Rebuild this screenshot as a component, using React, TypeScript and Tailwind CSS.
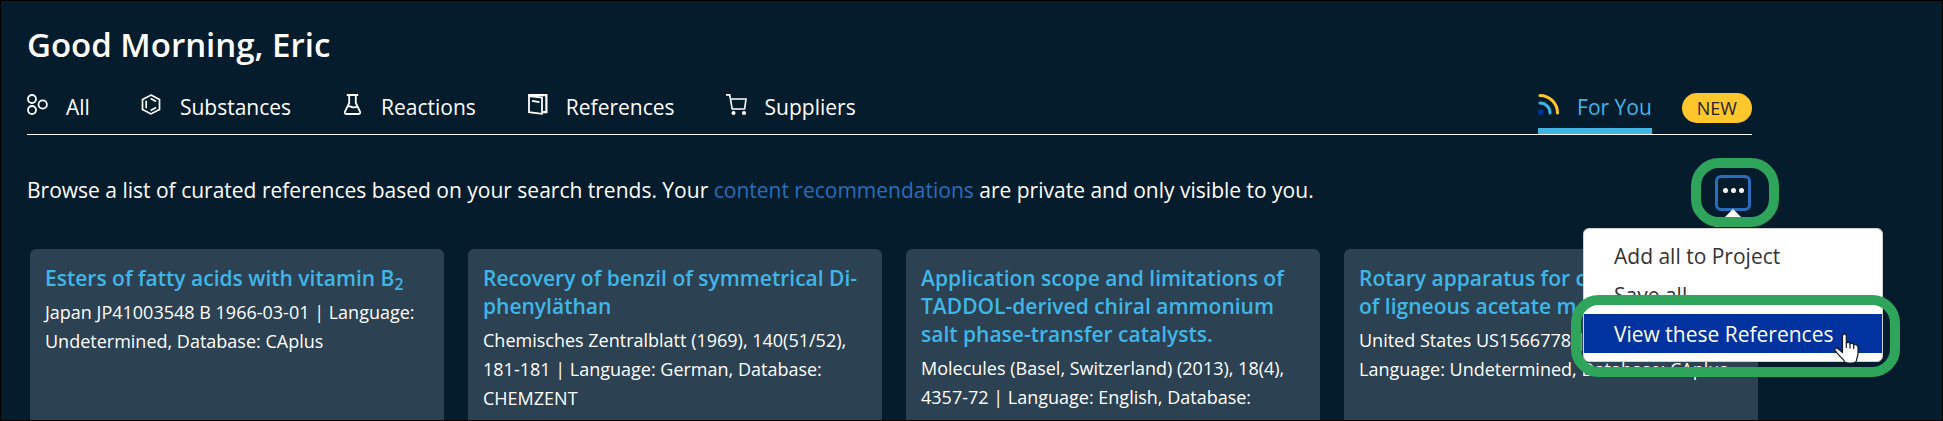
import React from "react";

type IconProps = { className?: string };

const AllIcon = ({ className }: IconProps) => (
  <svg viewBox="0 0 21 21" className={className} fill="none" stroke="#fff" strokeWidth="1.8" aria-hidden="true">
    <circle cx="5" cy="5" r="4" />
    <circle cx="5" cy="16" r="4" />
    <circle cx="15.7" cy="10.5" r="4.2" />
  </svg>
);

const SubstancesIcon = ({ className }: IconProps) => (
  <svg viewBox="0 0 21 21" className={className} fill="none" stroke="#fff" strokeWidth="1.7" aria-hidden="true">
    <path d="M10 1.1 18.5 5.6V15.4L10 19.9 1.5 15.4V5.6Z" />
    <path d="M5.2 6.8v7.4M9.7 4.6l5.4 3M9.7 16.4l5.4-3" />
  </svg>
);

const ReactionsIcon = ({ className }: IconProps) => (
  <svg viewBox="0 0 21 21" className={className} fill="none" stroke="#fff" strokeWidth="1.8" aria-hidden="true">
    <path d="M4.8 1h11.4M7.2 1v8L3 17.5Q2.200 20 4.500 20h12Q18.800 20 18 17.500L13.800 9V1" />
    <path d="M5.500 12.500C8 10.500 10 15.500 15.500 12.500" />
  </svg>
);

const ReferencesIcon = ({ className }: IconProps) => (
  <svg viewBox="0 0 21 21" className={className} fill="none" stroke="#fff" strokeWidth="1.8" aria-hidden="true">
    <path d="M2 2 15 3.600V19.800L2 18.200Z" />
    <path d="M1.200 1.200H19.400V18.200H15.500" strokeWidth="2.200" />
    <path d="M5 6.800 12.500 8.200" />
  </svg>
);

const SuppliersIcon = ({ className }: IconProps) => (
  <svg viewBox="0 0 21 21" className={className} fill="none" stroke="#fff" strokeWidth="1.6" aria-hidden="true">
    <path d="M0 .9H3.700L6.200 15H18.600L20 5H4.500" />
    <circle cx="7.500" cy="19" r="2" fill="#fff" stroke="none" />
    <circle cx="18" cy="19" r="2" fill="#fff" stroke="none" />
  </svg>
);

const FeedIcon = ({ className }: IconProps) => (
  <svg viewBox="0 0 21 21" className={className} fill="none" strokeWidth="3" strokeLinecap="round" aria-hidden="true">
    <path d="M2 1.500A17.500 17.500 0 0 1 19.500 19" stroke="#ffc72c" />
    <path d="M2 9A10 10 0 0 1 12 19" stroke="#41b6e6" />
    <circle cx="2.700" cy="18.300" r="2.700" fill="#0032a0" />
  </svg>
);

const HandCursor = ({ className }: IconProps) => (
  <svg viewBox="0 0 25 31" className={className} fill="#fff" stroke="#101828" strokeWidth="1.200" strokeLinejoin="round" aria-hidden="true">
    <path d="M8.500 3C8.500.2 12.300.2 12.300 3V10.500C13 8.800 15.500 9 16 10.800 17 9.600 19.300 10 19.700 12 21.500 10.800 24 12 24 14.500V21C24 23.500 22.500 25 22.500 27.500 22 31 10.500 31 10 27.500 7.500 24.500 4 22 1.200 17.500.2 15.200 2.500 14.200 4.500 16L8.500 19.500Z" />
    <path d="M12.300 10.500V15M16 11V15.500M19.700 12V16" fill="none" />
  </svg>
);

const tabs = [
  { label: "All", Icon: AllIcon },
  { label: "Substances", Icon: SubstancesIcon },
  { label: "Reactions", Icon: ReactionsIcon },
  { label: "References", Icon: ReferencesIcon },
  { label: "Suppliers", Icon: SuppliersIcon },
];

const cards: { title: React.ReactNode; body: React.ReactNode }[] = [
  {
    title: <>Esters of fatty acids with vitamin B<sub>2</sub></>,
    body: "Japan JP41003548 B 1966-03-01 | Language: Undetermined, Database: CAplus",
  },
  {
    title: "Recovery of benzil of symmetrical Di-phenyläthan",
    body: "Chemisches Zentralblatt (1969), 140(51/52), 181-181 | Language: German, Database: CHEMZENT",
  },
  {
    title: "Application scope and limitations of TADDOL-derived chiral ammonium salt phase-transfer catalysts.",
    body: "Molecules (Basel, Switzerland) (2013), 18(4), 4357-72 | Language: English, Database:",
  },
  {
    title: <>Rotary apparatus for c<br />of ligneous acetate m</>,
    body: <>United States US1566778 |<br />Language: Undetermined, Database: CAplus</>,
  },
];

export default function App() {
  return (
    <div className="relative flex h-screen flex-col overflow-hidden border border-black bg-[#041c2c] font-['Open_Sans',sans-serif] text-[21px] leading-7 text-white">
      <main className="flex min-h-0 flex-1 flex-col pt-6 pr-[190px] pl-[26px]">
        <h1 className="text-[33px] leading-10 font-semibold">Good Morning, Eric</h1>

        <nav className="mt-6 flex h-[46px] items-start border-b border-white">
          <div className="flex gap-[51px]">
            {tabs.map(({ label, Icon }) => (
              <a key={label} href="#" className="flex items-start gap-[18px] pt-1">
                <Icon className="mt-px size-[21px]" />
                <span>{label}</span>
              </a>
            ))}
          </div>
          <a href="#" aria-current="page" className="ml-auto flex h-full items-start gap-[18px] border-b-6 border-[#41b6e6] pt-1 text-[#41b6e6]">
            <FeedIcon className="mt-px size-[21px]" />
            <span>For You</span>
          </a>
          <span className="mt-1 ml-[30px] rounded-full bg-[#ffc72c] px-[15px] text-[18px] leading-[30px] text-[#222]">NEW</span>
        </nav>

        <div className="mt-10 flex items-start justify-between">
          <p className="leading-[30px]">
            Browse a list of curated references based on your search trends. Your{" "}
            <a href="#" className="text-[#2a6ebb]">content recommendations</a> are private and only visible to you.
          </p>
          <div className="relative mr-px">
            <button aria-label="More actions" aria-expanded="true" className="flex size-9 items-start justify-center gap-[3px] rounded-md border-3 border-[#2a6ebb] pt-2.5">
              <span className="size-[5px] rounded-full bg-white" />
              <span className="size-[5px] rounded-full bg-white" />
              <span className="size-[5px] rounded-full bg-white" />
            </button>
            <svg viewBox="0 0 36 18" className="absolute top-[34px] left-0 z-10 h-[18px] w-9" aria-hidden="true">
              <path d="M18 0 36 18H0Z" fill="#fff" />
            </svg>
            <div className="absolute -top-[17px] -left-6 z-30 h-[69px] w-[88px] rounded-[28px] border-10 border-[#2ea55b]" />
            <div role="menu" className="absolute top-[53px] -right-[132px] z-20 w-[300px] rounded-md border border-[#d0d0d0] bg-white pt-[7px] pb-2 text-[#333]">
              <button role="menuitem" className="block h-[39px] w-full px-[30px] text-left">Add all to Project</button>
              <button role="menuitem" className="block h-[39px] w-full px-[30px] text-left">Save all</button>
              <button role="menuitem" className="block h-[39px] w-full bg-[#0032a0] px-[30px] text-left text-white">View these References</button>
              <div className="absolute top-[66px] -right-[18px] h-[82px] w-[329px] rounded-[28px] border-10 border-[#2ea55b]" />
              <HandCursor className="absolute top-[104px] right-[23px] h-[31px] w-[25px]" />
            </div>
          </div>
        </div>

        <section className="mt-[38px] -mr-1.5 ml-[3px] grid min-h-0 flex-1 grid-cols-4 gap-6">
          {cards.map(({ title, body }, i) => (
            <article key={i} className="rounded-t-md bg-[#2c4151] px-[15px] pt-[15px]">
              <h2 className="font-semibold text-[#41b6e6]">
                <a href="#">{title}</a>
              </h2>
              <p className="mt-1.5 text-[18px] leading-[29px]">{body}</p>
            </article>
          ))}
        </section>
      </main>
    </div>
  );
}
